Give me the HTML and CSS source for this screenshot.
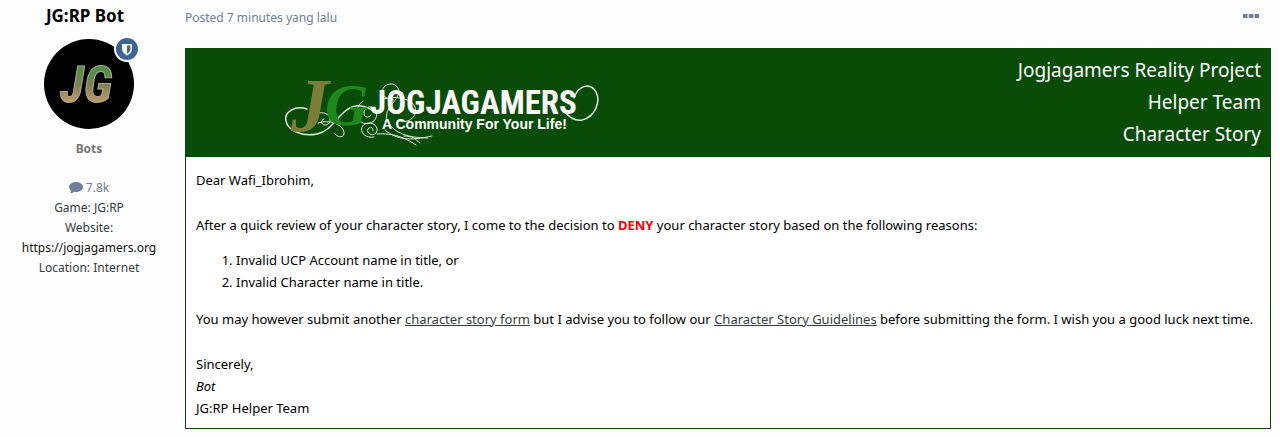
FILE: index.html
```html
<!DOCTYPE html>
<html lang="en">
<head>
<meta charset="utf-8">
<meta name="viewport" content="width=device-width, initial-scale=1">
<title>Character Story</title>
<link rel="stylesheet" href="styles.css">
</head>
<body>
<article class="post">
  <aside class="author">
    <h3 class="author-name">JG:RP Bot</h3>
    <div class="avatar">
      <svg class="avatar-image" viewBox="0 0 90 90" role="img" aria-label="JG:RP Bot">
        <defs>
          <linearGradient id="camo" x1="0" y1="0" x2="0" y2="1">
            <stop offset="0.2" stop-color="#4f8f48"/>
            <stop offset="0.5" stop-color="#7d8055"/>
            <stop offset="0.8" stop-color="#c79a6a"/>
          </linearGradient>
        </defs>
        <circle cx="45" cy="45" r="45" fill="#000"/>
        <text class="avatar-text" x="42" y="63" fill="url(#camo)">JG</text>
      </svg>
      <span class="badge">
        <svg viewBox="0 0 12 13" width="12" height="13" aria-hidden="true">
          <path d="M1 1h10v5c0 3-2.200 5-5 6.500C3.200 11 1 9 1 6z" fill="#fff"/>
          <path d="M6 2.600h3.400V6c0 2-1.400 3.600-3.400 4.700z" fill="#3d6594"/>
        </svg>
      </span>
    </div>
    <div class="group">Bots</div>
    <ul class="stats">
      <li><a class="post-count" href="#"><svg viewBox="0 0 14 12" width="14" height="12" aria-hidden="true"><path d="M7 0c3.900 0 7 2.200 7 5s-3.100 5-7 5c-.7 0-1.300 0-1.900-.2C4 10.800 2.400 11.500.8 11.600c.8-.8 1.300-1.700 1.400-2.900C.8 7.800 0 6.500 0 5c0-2.800 3.100-5 7-5z" fill="#6f7f9b"/></svg> 7.8k</a></li>
      <li>Game: JG:RP</li>
      <li>Website:</li>
      <li><a class="site" href="#">https://jogjagamers.org</a></li>
      <li>Location: Internet</li>
    </ul>
  </aside>
  <div class="content">
    <header class="meta">
      <a class="posted" href="#">Posted 7 minutes yang lalu</a>
      <button class="more" type="button" aria-label="More options">
        <svg viewBox="0 0 16 4" width="16" height="4" aria-hidden="true"><path d="M0 0h4.500v4H0zM5.800 0h4.500v4H5.800zM11.500 0H16v4h-4.500z" fill="#6f7f9b"/></svg>
      </button>
    </header>
    <section class="letter">
      <div class="banner">
        <svg class="logo" viewBox="0 0 320 76" width="320" height="76" role="img" aria-label="Jogjagamers, A Community For Your Life!">
          <g fill="none" stroke="#dfe9dc" stroke-linecap="round">
            <path d="M24 42C12 38 1 45 3 54c2 10 17 16 31 13 13-3 17-13 25-20 9-9 17-11 30-4" stroke-width="1.500"/>
            <path d="M30 52c2-7 10-8 15-4 4 4 2 10-3 10-4 0-5-5-1-6M35 56c12-4 24 1 26 9 1 6-6 6-9 2"/>
            <path d="M80 34c-8 6-9 18 0 22 9 3 16-5 13-12-3-6-11-5-12 1-1 5 5 7 7 3"/>
            <path d="M111 33c-11-1-15-8-9-14 8-6 18 2 12 11-5 9-14 14-9 25 6 11 20 16 40 16"/>
            <path d="M101 32c12-4 28 0 31 8 3 9-6 17-16 14"/>
            <path d="M91 70c-12 2-16-9-9-13 8-4 15 4 11 9-4 4-10 0-8-4 2-3 6-1 5 2M94 67c11-1 25 1 39 11"/>
            <path d="M102 63c12 10 25 11 47 6M121 69c9 0 11 3 16 7"/>
            <path d="M291 31c5-14 17-15 22-6 5 10-1 25-14 28-7 1-13-3-17-8" stroke-width="1.500"/>
          </g>
          <text class="logo-letter logo-j" x="8" y="64" fill="#7b7e36">J</text>
          <text class="logo-letter" x="42" y="58" fill="#1d891d">G</text>
          <text class="logo-name" x="87" y="47">JOGJAGAMERS</text>
          <text class="logo-tag" x="99" y="62">A Community For Your Life!</text>
        </svg>
        <div class="banner-text">
          <div>Jogjagamers Reality Project</div>
          <div>Helper Team</div>
          <div>Character Story</div>
        </div>
      </div>
      <div class="body">
        <p>Dear Wafi_Ibrohim,</p>
        <p class="spaced">After a quick review of your character story, I come to the decision to <strong class="deny">DENY</strong> your character story based on the following reasons:</p>
        <ol class="reasons">
          <li>Invalid UCP Account name in title, or</li>
          <li>Invalid Character name in title.</li>
        </ol>
        <p>You may however submit another <a href="#">character story form</a> but I advise you to follow our <a href="#">Character Story Guidelines</a> before submitting the form. I wish you a good luck next time.</p>
        <p class="spaced">Sincerely,<br><em>Bot</em><br>JG:RP Helper Team</p>
      </div>
    </section>
  </div>
</article>
</body>
</html>
```
FILE: styles.css
```css
* { box-sizing: border-box; }
body {
  margin: 0;
  background: #fdfdfd;
  color: #000;
  font-family: "Noto Sans", "Open Sans", sans-serif;
  font-size: 13px;
  line-height: 22px;
}
a { color: inherit; text-decoration: none; }
p { margin: 0; }

.post {
  display: grid;
  grid-template-columns: 178px minmax(0, 1fr);
  column-gap: 7px;
  padding: 4px 9px 8px 0;
}
.author { text-align: center; }
.author-name {
  margin: 0 8px 11px 0;
  font-size: 17px;
  line-height: 24px;
  font-weight: 700;
}
.avatar {
  position: relative;
  width: 90px;
  height: 90px;
  margin: 0 auto;
}
.avatar-image { display: block; width: 100%; height: 100%; }
.avatar-text {
  font: italic 700 50px "Roboto Condensed", Roboto, sans-serif;
  text-anchor: middle;
  stroke: #a9ac90;
  stroke-width: 1px;
}
.badge {
  position: absolute;
  top: -3px;
  right: -6px;
  display: grid;
  place-items: center;
  width: 26px;
  height: 26px;
  border: 2px solid #fdfdfd;
  border-radius: 50%;
  background: #3d6594;
}
.group {
  margin-top: 9px;
  color: #777;
  font-size: 12px;
  font-weight: 700;
}
.stats {
  margin: 18px 0 0;
  padding: 0;
  list-style: none;
  color: #353c41;
  font-size: 12px;
  line-height: 20px;
}
.post-count { color: #6f7f9b; }
.post-count svg { vertical-align: -2px; }
.site { color: #111; }

.meta {
  display: flex;
  justify-content: space-between;
  align-items: center;
  height: 22px;
  margin: 3px 12px 19px 0;
}
.posted { color: #6f7f9b; font-size: 12px; }
.more {
  display: flex;
  padding: 0 0 4px;
  border: 0;
  background: none;
}
.letter { border: 1px solid #084c08; background: #fff; }
.banner {
  display: flex;
  justify-content: space-between;
  padding: 5px 9px 7px 97px;
  background: #084c08;
  color: #fff;
}
.logo { margin-top: 13px; overflow: visible; }
.logo-letter { font: italic 700 60px "Liberation Serif", serif; }
.logo-j { font-size: 76px; }
.logo-name {
  fill: #fdf8f8;
  font: 700 33px "Roboto Condensed", Roboto, sans-serif;
}
.logo-tag {
  fill: #fff;
  font: 700 14px "Liberation Sans", sans-serif;
}
.banner-text {
  font-size: 19px;
  line-height: 32px;
  text-align: right;
}
.body { padding: 12px 10px 9px; }
.body a { color: #353c41; text-decoration: underline; }
.spaced { margin-top: 23px; }
.deny { color: #f00; }
.reasons { margin: 13px 0 15px; padding-left: 40px; }
```
